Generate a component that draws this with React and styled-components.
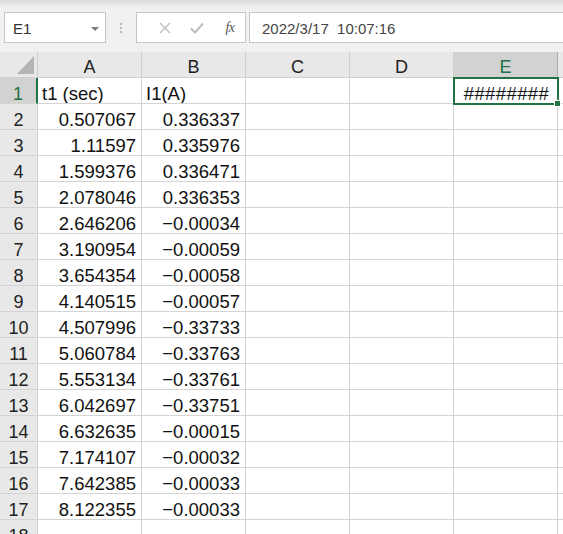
import React from "react";
import styled, { createGlobalStyle } from "styled-components";

const Global = createGlobalStyle`
  html, body { margin: 0; padding: 0; background: #ffffff; overflow: hidden; }
  body { font-family: "Liberation Sans", Arial, sans-serif; }
`;

const GREEN = "#217346";

const Page = styled.div`
  width: 563px;
  height: 534px;
  overflow: hidden;
  display: flex;
  flex-direction: column;
  background: #ffffff;
`;

const FormulaBar = styled.div`
  height: 52px;
  box-sizing: border-box;
  background: linear-gradient(#d9d9d9 0px, #ececec 6px, #f1f1f1 11px, #f1f1f1 100%);
  display: flex;
  align-items: flex-start;
  padding: 12px 0 0 4px;
  flex-shrink: 0;
`;

const Box = styled.div`
  height: 31px;
  box-sizing: border-box;
  border: 1px solid #c6c6c6;
  background: #ffffff;
  display: flex;
  align-items: center;
`;

const NameBox = styled(Box)`
  width: 102px;
  padding: 1px 6px 0 8px;
  justify-content: space-between;
  font-size: 15px;
  color: #333333;
`;

const Caret = styled.div`
  width: 0;
  height: 0;
  border-left: 4px solid transparent;
  border-right: 4px solid transparent;
  border-top: 4px solid #7a7a7a;
  margin-top: 1px;
`;

const Grip = styled.div`
  width: 30px;
  height: 31px;
  display: flex;
  flex-direction: column;
  align-items: center;
  justify-content: center;
  gap: 2px;
  & > i {
    display: block;
    width: 2px;
    height: 2px;
    background: #b5b5b5;
  }
`;

const FxBox = styled(Box)`
  width: 110px;
  padding: 0 0 0 12px;
  gap: 0;
`;

const IconSlot = styled.div`
  width: 36px;
  height: 29px;
  display: flex;
  align-items: center;
  justify-content: center;
`;

const Fx = styled.span`
  font-family: "Liberation Serif", "Times New Roman", serif;
  font-style: italic;
  font-size: 14px;
  color: #555555;
  letter-spacing: -0.5px;
  margin-left: 2px;
`;

const FormulaInput = styled(Box)`
  flex: 1;
  margin-left: 3px;
  border-right: none;
  padding: 1px 0 0 12px;
  font-size: 15px;
  color: #444444;
  white-space: pre;
`;

const SheetWrap = styled.div`
  position: relative;
  flex: 1;
`;

const Sheet = styled.div`
  display: grid;
  grid-template-columns: 38px repeat(5, 104px) 1fr;
  grid-template-rows: 26px;
  grid-auto-rows: 26px;
`;

const Cell = styled.div`
  box-sizing: border-box;
  border-right: 1px solid #d4d4d4;
  border-bottom: 1px solid #d4d4d4;
  font-size: 18.5px;
  line-height: 18px;
  padding: 7px 5px 0 4px;
  color: #111111;
  text-align: ${(p) => p.$align || "left"};
  white-space: nowrap;
  overflow: hidden;
`;

const ColHead = styled(Cell)`
  background: ${(p) => (p.$sel ? "#d2d2d2" : "#e8e8e8")};
  color: ${(p) => (p.$sel ? GREEN : "#222222")};
  border-right: 1px solid ${(p) => (p.$sel ? "#ababab" : "#cfcfcf")};
  border-bottom: 1px solid ${(p) => (p.$sel ? GREEN : "#cfcfcf")};
  text-align: center;
  padding: 6px 0 0 0;
  font-size: 18px;
`;

const Corner = styled(ColHead)`
  position: relative;
  border-right: 1px solid #cfcfcf;
  &::after {
    content: "";
    position: absolute;
    right: 3px;
    bottom: 3px;
    width: 0;
    height: 0;
    border-left: 17px solid transparent;
    border-bottom: 18px solid #b4b4b4;
  }
`;

const RowHead = styled(Cell)`
  background: ${(p) => (p.$sel ? "#d2d2d2" : "#e8e8e8")};
  color: ${(p) => (p.$sel ? GREEN : "#222222")};
  border-right: ${(p) => (p.$sel ? `2px solid ${GREEN}` : "1px solid #cfcfcf")};
  text-align: center;
  padding: 7px 0 0 0;
  font-size: 18px;
`;

const Selection = styled.div`
  position: absolute;
  left: 453px;
  top: 25px;
  width: 106px;
  height: 28px;
  box-sizing: border-box;
  border: 2px solid ${GREEN};
  pointer-events: none;
`;

const Handle = styled.div`
  position: absolute;
  right: -4px;
  bottom: -4px;
  width: 5px;
  height: 5px;
  background: ${GREEN};
  border: 1px solid #ffffff;
`;

const Hashes = styled(Cell)`
  text-align: center;
  padding-left: 2px;
  padding-right: 0;
  letter-spacing: 0.4px;
`;

const colA = [
  "0.507067", "1.11597", "1.599376", "2.078046", "2.646206", "3.190954",
  "3.654354", "4.140515", "4.507996", "5.060784", "5.553134", "6.042697",
  "6.632635", "7.174107", "7.642385", "8.122355",
];
const colB = [
  "0.336337", "0.335976", "0.336471", "0.336353", "−0.00034", "−0.00059",
  "−0.00058", "−0.00057", "−0.33733", "−0.33763", "−0.33761", "−0.33751",
  "−0.00015", "−0.00032", "−0.00033", "−0.00033",
];

export default function App() {
  const cols = ["A", "B", "C", "D", "E"];
  return (
    <>
      <Global />
      <Page>
        <FormulaBar>
          <NameBox>
            <span>E1</span>
            <Caret />
          </NameBox>
          <Grip>
            <i />
            <i />
            <i />
          </Grip>
          <FxBox>
            <IconSlot>
              <svg width="12" height="12" viewBox="0 0 12 12">
                <path d="M1 1 L11 11 M11 1 L1 11" stroke="#bdbdbd" strokeWidth="1.3" fill="none" />
              </svg>
            </IconSlot>
            <IconSlot>
              <svg width="14" height="12" viewBox="0 0 14 12">
                <path d="M1 6.5 L5 10.5 L13 1.5" stroke="#bdbdbd" strokeWidth="2" fill="none" />
              </svg>
            </IconSlot>
            <IconSlot>
              <Fx>fx</Fx>
            </IconSlot>
          </FxBox>
          <FormulaInput>2022/3/17  10:07:16</FormulaInput>
        </FormulaBar>
        <SheetWrap>
          <Sheet>
            <Corner />
            {cols.map((c) => (
              <ColHead key={c} $sel={c === "E"}>
                {c}
              </ColHead>
            ))}
            <ColHead />
            <RowHead $sel>1</RowHead>
            <Cell>t1 (sec)</Cell>
            <Cell>I1(A)</Cell>
            <Cell />
            <Cell />
            <Hashes>########</Hashes>
            <Cell />
            {colA.map((a, i) => (
              <React.Fragment key={i}>
                <RowHead>{i + 2}</RowHead>
                <Cell $align="right">{a}</Cell>
                <Cell $align="right">{colB[i]}</Cell>
                <Cell />
                <Cell />
                <Cell />
                <Cell />
              </React.Fragment>
            ))}
            <RowHead>18</RowHead>
            <Cell />
            <Cell />
            <Cell />
            <Cell />
            <Cell />
            <Cell />
          </Sheet>
          <Selection>
            <Handle />
          </Selection>
        </SheetWrap>
      </Page>
    </>
  );
}
